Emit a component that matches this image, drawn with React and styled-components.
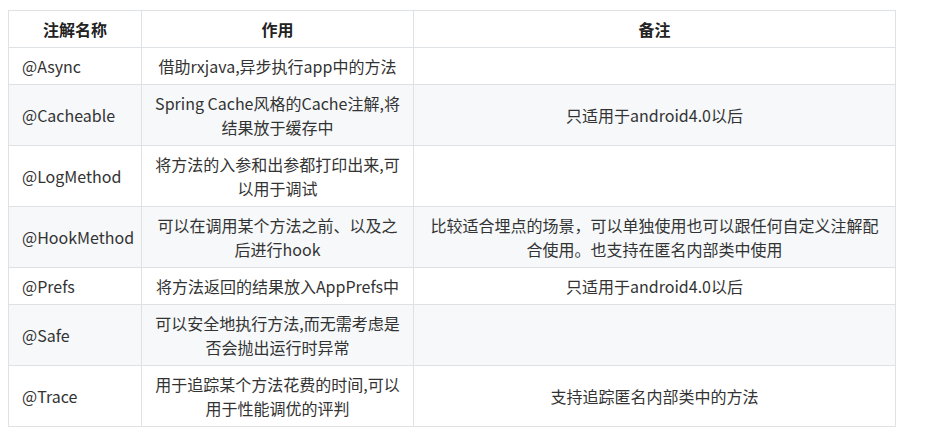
import styled, { createGlobalStyle } from 'styled-components';

const GlobalStyle = createGlobalStyle`
  body {
    margin: 0;
    background: #fff;
    font-family: "Noto Sans CJK SC", "Noto Sans", sans-serif;
  }
`;

const rows = [
  { name: '@Async', use: ['借助rxjava,异步执行app中的方法'], note: [] },
  { name: '@Cacheable', use: ['Spring Cache风格的Cache注解,将', '结果放于缓存中'], note: ['只适用于android4.0以后'] },
  { name: '@LogMethod', use: ['将方法的入参和出参都打印出来,可', '以用于调试'], note: [] },
  {
    name: '@HookMethod',
    use: ['可以在调用某个方法之前、以及之', '后进行hook'],
    note: ['比较适合埋点的场景，可以单独使用也可以跟任何自定义注解配', '合使用。也支持在匿名内部类中使用'],
  },
  { name: '@Prefs', use: ['将方法返回的结果放入AppPrefs中'], note: ['只适用于android4.0以后'] },
  { name: '@Safe', use: ['可以安全地执行方法,而无需考虑是', '否会抛出运行时异常'], note: [] },
  { name: '@Trace', use: ['用于追踪某个方法花费的时间,可以', '用于性能调优的评判'], note: ['支持追踪匿名内部类中的方法'] },
];

function Lines({ lines }) {
  return lines.map((l, i) => (
    <span key={i}>
      {i > 0 && <br />}
      {l}
    </span>
  ));
}

function App() {
  return (
    <Page>
      <GlobalStyle />
      <Table>
        <colgroup>
          <col style={{ width: 133 }} />
          <col style={{ width: 272 }} />
          <col style={{ width: 482 }} />
        </colgroup>
        <thead>
          <tr>
            <Th>注解名称</Th>
            <Th>作用</Th>
            <Th>备注</Th>
          </tr>
        </thead>
        <tbody>
          {rows.map((r) => (
            <Row key={r.name}>
              <Td>{r.name}</Td>
              <Td $center>
                <Lines lines={r.use} />
              </Td>
              <Td $center>
                <Lines lines={r.note} />
              </Td>
            </Row>
          ))}
        </tbody>
      </Table>
    </Page>
  );
}

export default App;

const Page = styled.div`
  padding: 10px 8px;
`;

const Table = styled.table`
  border-collapse: collapse;
  table-layout: fixed;
  width: 888px;
  font-size: 16px;
  line-height: 24px;
  color: #333;
`;

const Th = styled.th`
  padding: 6px 13px;
  border: 1px solid #dfe2e5;
  font-weight: 700;
  text-align: center;
  color: #222;
  white-space: nowrap;
`;

const Row = styled.tr`
  background: #fff;

  &:nth-child(2n) {
    background: #f6f8fa;
  }
`;

const Td = styled.td`
  padding: 6px 13px;
  border: 1px solid #dfe2e5;
  text-align: ${(p) => (p.$center ? 'center' : 'left')};
  white-space: nowrap;
  height: 24px;
`;
